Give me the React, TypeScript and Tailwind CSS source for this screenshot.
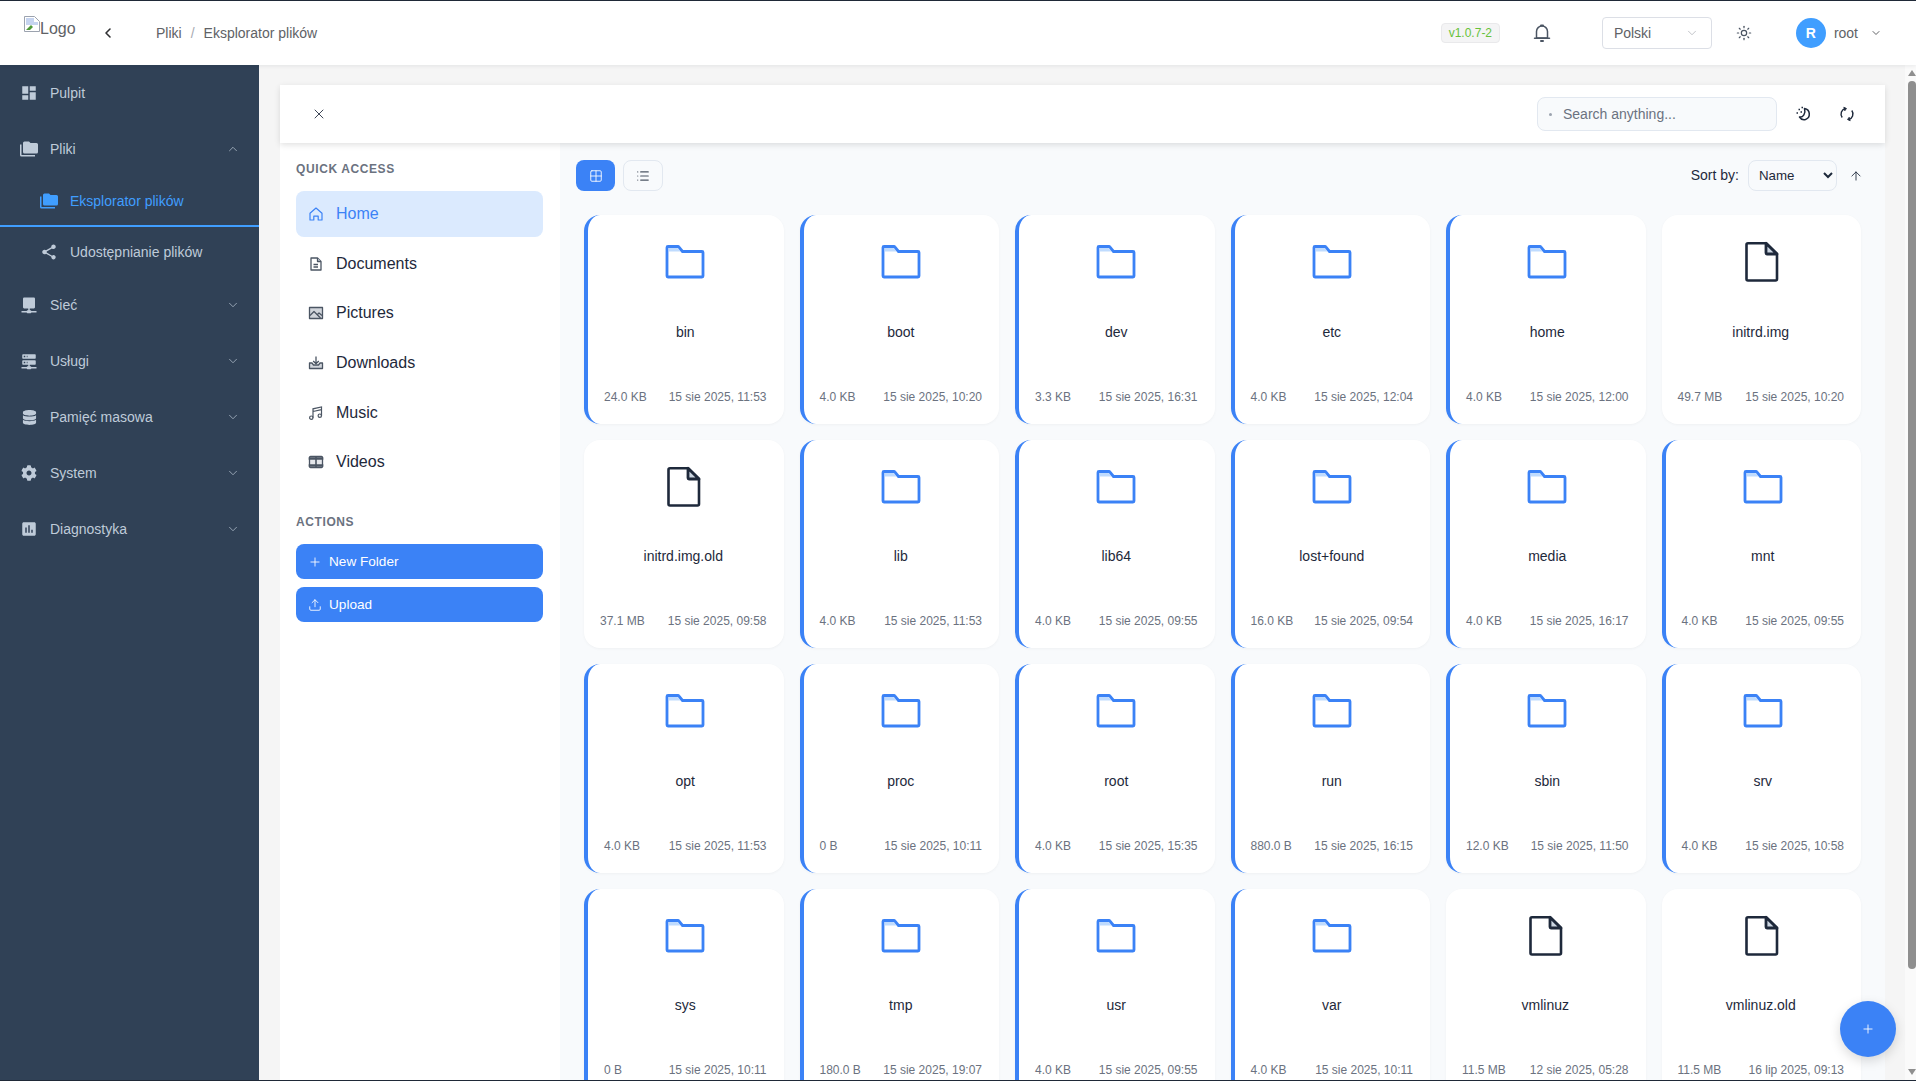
import { ReactNode } from "react";
import { ChevronDown, ChevronLeft, ChevronUp, ArrowUp, Grid2x2, List, Plus, Sun, Upload, X } from "lucide-react";
import { FaCog, FaDatabase } from "react-icons/fa";
import { MdAssessment, MdDashboard, MdShare } from "react-icons/md";

type Entry = { name: string; size: string; date: string; file?: boolean };

const entries: Entry[] = [
  { name: "bin", size: "24.0 KB", date: "15 sie 2025, 11:53" },
  { name: "boot", size: "4.0 KB", date: "15 sie 2025, 10:20" },
  { name: "dev", size: "3.3 KB", date: "15 sie 2025, 16:31" },
  { name: "etc", size: "4.0 KB", date: "15 sie 2025, 12:04" },
  { name: "home", size: "4.0 KB", date: "15 sie 2025, 12:00" },
  { name: "initrd.img", size: "49.7 MB", date: "15 sie 2025, 10:20", file: true },
  { name: "initrd.img.old", size: "37.1 MB", date: "15 sie 2025, 09:58", file: true },
  { name: "lib", size: "4.0 KB", date: "15 sie 2025, 11:53" },
  { name: "lib64", size: "4.0 KB", date: "15 sie 2025, 09:55" },
  { name: "lost+found", size: "16.0 KB", date: "15 sie 2025, 09:54" },
  { name: "media", size: "4.0 KB", date: "15 sie 2025, 16:17" },
  { name: "mnt", size: "4.0 KB", date: "15 sie 2025, 09:55" },
  { name: "opt", size: "4.0 KB", date: "15 sie 2025, 11:53" },
  { name: "proc", size: "0 B", date: "15 sie 2025, 10:11" },
  { name: "root", size: "4.0 KB", date: "15 sie 2025, 15:35" },
  { name: "run", size: "880.0 B", date: "15 sie 2025, 16:15" },
  { name: "sbin", size: "12.0 KB", date: "15 sie 2025, 11:50" },
  { name: "srv", size: "4.0 KB", date: "15 sie 2025, 10:58" },
  { name: "sys", size: "0 B", date: "15 sie 2025, 10:11" },
  { name: "tmp", size: "180.0 B", date: "15 sie 2025, 19:07" },
  { name: "usr", size: "4.0 KB", date: "15 sie 2025, 09:55" },
  { name: "var", size: "4.0 KB", date: "15 sie 2025, 10:11" },
  { name: "vmlinuz", size: "11.5 MB", date: "12 sie 2025, 05:28", file: true },
  { name: "vmlinuz.old", size: "11.5 MB", date: "16 lip 2025, 09:13", file: true },
];

const FoldersIcon = ({ className }: { className: string }) => (
  <svg viewBox="0 0 24 24" fill="currentColor" className={className}>
    <path d="M22 4h-8l-2-2H6a2 2 0 0 0-2 2v12a2 2 0 0 0 2 2h16a2 2 0 0 0 2-2V6a2 2 0 0 0-2-2ZM2 6H0v14a2 2 0 0 0 2 2h18v-2H2V6Z" />
  </svg>
);

const DesktopIcon = ({ className }: { className: string }) => (
  <svg viewBox="0 0 24 24" fill="currentColor" className={className}>
    <path d="M5.5 2h13A1.5 1.5 0 0 1 20 3.500V15a1.500 1.500 0 0 1-1.500 1.500H13V19h1a1 1 0 0 1 1 1h7v2h-7a1 1 0 0 1-1 1h-4a1 1 0 0 1-1-1H2v-2h7a1 1 0 0 1 1-1h1v-2.500H5.500A1.500 1.500 0 0 1 4 15V3.500A1.500 1.500 0 0 1 5.500 2Z" />
  </svg>
);

const ServerIcon = ({ className }: { className: string }) => (
  <svg viewBox="0 0 24 24" fill="currentColor" className={className}>
    <path d="M13 19h1a1 1 0 0 1 1 1h7v2h-7a1 1 0 0 1-1 1h-4a1 1 0 0 1-1-1H2v-2h7a1 1 0 0 1 1-1h1v-2H4a1 1 0 0 1-1-1v-4a1 1 0 0 1 1-1h16a1 1 0 0 1 1 1v4a1 1 0 0 1-1 1h-7v2ZM4 3h16a1 1 0 0 1 1 1v4a1 1 0 0 1-1 1H4a1 1 0 0 1-1-1V4a1 1 0 0 1 1-1Zm5 4h1V5H9v2Zm0 8h1v-2H9v2ZM5 5v2h2V5H5Zm0 8v2h2v-2H5Z" />
  </svg>
);

const FolderGlyph = () => (
  <svg viewBox="0 0 48 48" className="h-12 w-12" fill="none">
    <path d="M8 10h8.500l3 3.500H8Z" fill="#bfdbfe" />
    <path
      d="M7 8.500h10a1 1 0 0 1 .8.400l3.700 4.600H41a1 1 0 0 1 1 1V38a1 1 0 0 1-1 1H7a1 1 0 0 1-1-1V9.500a1 1 0 0 1 1-1Z"
      stroke="#3b82f6"
      strokeWidth="2.800"
      strokeLinejoin="round"
    />
  </svg>
);

const FileGlyph = () => (
  <svg viewBox="0 0 48 48" className="ml-[2px] h-12 w-12" fill="none">
    <path
      d="M10 5.200h18L39 16v25a1.500 1.500 0 0 1-1.500 1.500H10A1.500 1.500 0 0 1 8.500 41V6.700A1.500 1.500 0 0 1 10 5.200Z"
      stroke="#1e293b"
      strokeWidth="2.600"
      strokeLinejoin="round"
    />
    <path d="M28 5.200V15a1 1 0 0 0 1 1h10Z" fill="#cbd5e1" stroke="#1e293b" strokeWidth="2.800" strokeLinejoin="round" />
  </svg>
);

const HomeGlyph = () => (
  <svg viewBox="0 0 16 16" className="h-4 w-4" fill="none" stroke="currentColor" strokeWidth="1.200" strokeLinejoin="round">
    <path d="M2 7.200 8 2l6 5.200V14h-3.800v-3.800H5.800V14H2Z" />
  </svg>
);

const DocGlyph = () => (
  <svg viewBox="0 0 16 16" className="h-4 w-4" fill="none" stroke="currentColor" strokeWidth="1.300" strokeLinejoin="round">
    <path d="M3 2h6.500L13 5.500V14H3Z" />
    <path d="M9.500 2v3.500H13" fill="#cbd5e1" />
    <path d="M5.500 8.500h4.500M5.500 11h4.500" />
  </svg>
);

const PictureGlyph = () => (
  <svg viewBox="0 0 16 16" className="h-4 w-4" fill="none" stroke="currentColor" strokeWidth="1.300" strokeLinejoin="round">
    <rect x="1.500" y="2.500" width="13" height="11" fill="#d1d5db" />
    <path d="M2 10.500 6 6.500l6.500 6.500M9.500 9.500 11 8l3 2.500" />
  </svg>
);

const DownloadGlyph = () => (
  <svg viewBox="0 0 16 16" className="h-4 w-4" fill="none" stroke="currentColor" strokeWidth="1.300" strokeLinejoin="round">
    <path d="M8 1.500v7M5.200 6 8 8.800 10.800 6" />
    <path d="M4 8H1.500v5.500h13V8H12L10.500 10h-5Z" fill="#d1d5db" />
  </svg>
);

const MusicGlyph = () => (
  <svg viewBox="0 0 16 16" className="h-4 w-4" fill="none" stroke="currentColor" strokeWidth="1.200">
    <circle cx="3.300" cy="12.700" r="1.700" />
    <circle cx="11.800" cy="10.700" r="1.700" />
    <path d="M5 12.700V3.800L13.500 2v8.700M5 6.500l8.500-1.800" />
  </svg>
);

const VideoGlyph = () => (
  <svg viewBox="0 0 16 16" className="h-4 w-4" fill="none" stroke="currentColor" strokeWidth="1.300">
    <rect x="1.500" y="2.500" width="13" height="11" rx="1" fill="#e5e7eb" />
    <path d="M1.500 5H14.500V4h-13ZM1.500 12H14.500V11h-13ZM8 3v10" strokeWidth="1.600" />
  </svg>
);

const MoonGlyph = () => (
  <svg viewBox="0 0 16 16" className="h-4 w-4" fill="none" stroke="#1e293b">
    <path d="M8.500 2.500a5.700 5.700 0 0 1 1 11 5.500 5.500 0 0 1-6-2.500c3.500.7 6.500-3.500 5-8.500Z" strokeWidth="1.500" strokeLinejoin="round" />
    <path d="M2.500 3.500h1.500M5.500 1.500h1.500M.5 7h1.500M4.500 6h1.500" strokeWidth="1.400" />
  </svg>
);

const RefreshGlyph = () => (
  <svg viewBox="0 0 16 16" className="h-4 w-4" fill="none" stroke="#1e293b" strokeWidth="1.400" strokeLinejoin="round">
    <path d="M3.200 11.500A5.800 5.800 0 0 1 6.500 2.400" />
    <path d="M12.800 4.500A5.800 5.800 0 0 1 9.500 13.600" />
    <path d="M4.800 1.200 7.500 2.500 5.800 4.800ZM11.200 14.800 8.500 13.500l1.700-2.300Z" fill="#1e293b" strokeWidth="0.800" />
  </svg>
);

const BellGlyph = () => (
  <svg viewBox="0 0 20 20" className="h-5 w-5" fill="none" stroke="#4b5563" strokeWidth="1.500" strokeLinejoin="round">
    <path d="M4.500 15V8.500a5.500 5.500 0 0 1 11 0V15Z" />
    <path d="M2.500 15.200h15" strokeLinecap="round" />
    <path d="M9 2.500h2M9 18h2" strokeWidth="2" strokeLinecap="round" />
  </svg>
);

const SideRow = ({ icon, label, open }: { icon: ReactNode; label: string; open?: boolean }) => (
  <div className="flex h-14 items-center pl-5 pr-[19px] text-sm text-[#bfcbd9]">
    <span className="flex w-[18px] justify-center">{icon}</span>
    <span className="ml-3 flex-1">{label}</span>
    {open === undefined ? null : open ? (
      <ChevronUp className="h-3.5 w-3.5" strokeWidth={1.200} />
    ) : (
      <ChevronDown className="h-3.5 w-3.5" strokeWidth={1.200} />
    )}
  </div>
);

const Sidebar = () => (
  <aside className="w-[259px] shrink-0 bg-[#304156]">
    <SideRow icon={<MdDashboard className="h-[18px] w-[18px]" />} label="Pulpit" />
    <SideRow icon={<FoldersIcon className="h-[18px] w-[18px]" />} label="Pliki" open />
    <div className="flex h-[50px] items-center border-b-2 border-[#409eff] pl-10 text-sm text-[#409eff]">
      <FoldersIcon className="h-[18px] w-[18px]" />
      <span className="ml-3">Eksplorator plików</span>
    </div>
    <div className="flex h-[50px] items-center pl-10 text-sm text-[#bfcbd9]">
      <MdShare className="h-[18px] w-[18px]" />
      <span className="ml-3">Udostępnianie plików</span>
    </div>
    <SideRow icon={<DesktopIcon className="h-[18px] w-[18px]" />} label="Sieć" open={false} />
    <SideRow icon={<ServerIcon className="h-[18px] w-[18px]" />} label="Usługi" open={false} />
    <SideRow icon={<FaDatabase className="h-[15px] w-[15px]" />} label="Pamięć masowa" open={false} />
    <SideRow icon={<FaCog className="h-4 w-4" />} label="System" open={false} />
    <SideRow icon={<MdAssessment className="h-[18px] w-[18px]" />} label="Diagnostyka" open={false} />
  </aside>
);

const Header = () => (
  <header className="relative z-20 flex h-16 shrink-0 items-center bg-white pr-[34px] shadow-[0_1px_4px_rgba(0,21,41,0.08)]">
    <div className="flex w-[104px] items-start pl-6">
      <div className="-mt-[11px] flex items-start text-base text-[#606266]">
        <svg viewBox="0 0 16 16" className="h-4 w-4 shrink-0">
          <path d="M.5.500h10l5 5v10H.5Z" fill="#fff" stroke="#9ca3af" />
          <path d="M2 2h8v4h4v3H2Z" fill="#c6d4f0" />
          <path d="M2 14l5-5 2 2-3 3Z" fill="#4f9a3a" />
        </svg>
        <span className="mt-[3px] leading-5">Logo</span>
      </div>
    </div>
    <ChevronLeft className="h-4 w-4 -ml-1 text-[#303133]" strokeWidth={2.400} />
    <nav className="ml-[40px] flex items-center text-sm text-[#606266]">
      <span>Pliki</span>
      <span className="mx-[9px] text-[#a8abb2]">/</span>
      <span>Eksplorator plików</span>
    </nav>
    <div className="ml-auto flex h-5 w-[59px] items-center justify-center rounded border border-[#e9e9eb] bg-[#f4f4f5] text-xs text-[#67c23a]">v1.0.7-2</div>
    <span className="ml-[32px]">
      <BellGlyph />
    </span>
    <div className="ml-[50px] flex h-8 w-[110px] items-center justify-between rounded border border-[#dcdfe6] pl-[11px] pr-[12px] text-sm text-[#606266]">
      <span>Polski</span>
      <ChevronDown className="h-3.5 w-3.5 text-[#a8abb2]" strokeWidth={1.200} />
    </div>
    <Sun className="ml-6 h-4 w-4 text-[#4b5563]" strokeWidth={1.800} />
    <div className="ml-[44px] flex h-[30px] w-[30px] items-center justify-center rounded-full bg-[#409eff] text-sm font-bold text-white">R</div>
    <span className="ml-2 text-sm text-[#606266]">root</span>
    <ChevronDown className="ml-3 h-3 w-3 text-[#606266]" strokeWidth={2} />
  </header>
);

const QuickRow = ({ icon, label, active }: { icon: ReactNode; label: string; active?: boolean }) => (
  <div
    className={
      active
        ? "flex h-[45.7px] items-center rounded-lg bg-[#dbeafe] pl-3 text-base text-[#3b82f6]"
        : "flex h-[45.7px] items-center pl-3 text-base text-[#1e293b]"
    }
  >
    <span className={active ? "text-[#3b82f6]" : "text-[#4b5563]"}>{icon}</span>
    <span className="ml-3">{label}</span>
  </div>
);

const ActionButton = ({ icon, label }: { icon: ReactNode; label: string }) => (
  <button className="flex h-[35px] items-center rounded-lg bg-[#3b82f6] pl-3 text-[13.6px] text-white">
    {icon}
    <span className="ml-[7px] mt-px">{label}</span>
  </button>
);

const QuickAccess = () => (
  <div className="w-[280px] shrink-0 bg-white pl-4 pr-[17px] pt-[18px]">
    <div className="mb-[14px] text-xs font-bold leading-4 tracking-[0.6px] text-[#6b7280]">QUICK ACCESS</div>
    <div className="flex flex-col gap-1">
      <QuickRow icon={<HomeGlyph />} label="Home" active />
      <QuickRow icon={<DocGlyph />} label="Documents" />
      <QuickRow icon={<PictureGlyph />} label="Pictures" />
      <QuickRow icon={<DownloadGlyph />} label="Downloads" />
      <QuickRow icon={<MusicGlyph />} label="Music" />
      <QuickRow icon={<VideoGlyph />} label="Videos" />
    </div>
    <div className="mb-[14px] mt-[29px] text-xs font-bold leading-4 tracking-[0.6px] text-[#6b7280]">ACTIONS</div>
    <div className="flex flex-col gap-2">
      <ActionButton icon={<Plus className="h-3.5 w-3.5" strokeWidth={1.500} />} label="New Folder" />
      <ActionButton icon={<Upload className="h-3.5 w-3.5" strokeWidth={1.500} />} label="Upload" />
    </div>
  </div>
);

const EntryCard = ({ entry }: { entry: Entry }) => (
  <div
    className={
      entry.file
        ? "flex h-[208.5px] flex-col items-center rounded-2xl bg-white pb-[19px] pl-4 pr-[17px] pt-[23px] shadow-[0_1px_3px_rgba(0,0,0,0.04)]"
        : "flex h-[208.5px] flex-col items-center rounded-2xl border-l-4 border-[#3b82f6] bg-white pb-[19px] pl-4 pr-[17px] pt-[23px] shadow-[0_1px_3px_rgba(0,0,0,0.04)]"
    }
  >
    {entry.file ? <FileGlyph /> : <FolderGlyph />}
    <div className="mt-[35.6px] text-sm leading-5 text-[#1e293b]">{entry.name}</div>
    <div className="mt-auto flex w-full justify-between text-xs leading-4 text-[#6b7280]">
      <span>{entry.size}</span>
      <span>{entry.date}</span>
    </div>
  </div>
);

const Explorer = () => (
  <div className="min-w-0 flex-1 bg-[#f8fafc] pb-6">
    <div className="mt-[17px] flex h-[31px] items-center pl-4 pr-[22px]">
      <button className="flex h-[31px] w-[39px] items-center justify-center rounded-lg bg-[#3b82f6] text-white">
        <Grid2x2 className="h-3.5 w-3.5" strokeWidth={1.500} />
      </button>
      <button className="ml-2 flex h-[31px] w-[40px] items-center justify-center rounded-lg border border-[#e2e8f0] text-[#4b5563]">
        <List className="h-3.5 w-3.5" strokeWidth={2} />
      </button>
      <span className="ml-auto -mt-px text-sm text-[#1e293b]">Sort by:</span>
      <select className="ml-[9px] h-[31px] w-[89px] rounded-lg border border-[#e2e8f0] bg-[#f8fafc] pl-[6px] text-[13.3px] text-[#1e293b]">
        <option>Name</option>
      </select>
      <ArrowUp className="ml-3 h-3.5 w-3.5 text-[#1e293b]" strokeWidth={1.500} />
    </div>
    <div className="mt-6 grid grid-cols-6 gap-4 px-6">
      {entries.map((entry) => (
        <EntryCard key={entry.name} entry={entry} />
      ))}
    </div>
  </div>
);

// the page scrollbar is drawn by hand, headless chrome hides the native one
const ScrollTrack = () => (
  <div className="flex w-[11px] shrink-0 flex-col items-end bg-[#fafafa]">
    <svg viewBox="0 0 8 6" className="mt-[5px] h-[6px] w-2 text-[#8f8f8f]" fill="currentColor">
      <path d="M4 0 8 6H0Z" />
    </svg>
    <div className="mt-[5px] h-[888px] w-2 rounded-full bg-[#8f8f8f]" />
    <svg viewBox="0 0 8 6" className="mb-[5px] mt-auto h-[6px] w-2 text-[#8f8f8f]" fill="currentColor">
      <path d="M4 6 8 0H0Z" />
    </svg>
  </div>
);

export default function App() {
  return (
    <div className="relative flex h-[1081px] flex-col overflow-hidden border-y border-[#1f2937] bg-[#f5f5f5] font-['Liberation_Sans',sans-serif]">
      <Header />
      <div className="flex min-h-0 flex-1">
        <Sidebar />
        <main className="min-w-0 flex-1 overflow-hidden pl-[21px] pr-5 pt-5">
          <div className="relative z-10 flex h-[58px] items-center justify-between bg-white pl-[31px] pr-[30px] shadow-[0_2px_6px_rgba(0,0,0,0.12)]">
            <X className="h-4 w-4 text-[#1e293b]" strokeWidth={1.300} />
            <div className="flex items-center">
              <div className="flex h-[34px] w-[240px] items-center rounded-lg border border-[#e2e8f0] bg-[#f8fafc] pl-[11px] text-sm text-[#6b7280]">
                <span className="h-[3px] w-[3px] rounded-full bg-[#9ca3af]" />
                <span className="ml-[11px]">Search anything...</span>
              </div>
              <span className="ml-[19px]">
                <MoonGlyph />
              </span>
              <span className="ml-[27px]">
                <RefreshGlyph />
              </span>
            </div>
          </div>
          <div className="flex">
            <QuickAccess />
            <Explorer />
          </div>
        </main>
        <ScrollTrack />
      </div>
      <button className="absolute left-[1840px] top-[1000px] z-30 flex h-14 w-14 items-center justify-center rounded-full bg-[#3b82f6] text-white shadow-[0_4px_12px_rgba(0,0,0,0.15)]">
        <Plus className="h-3.5 w-3.5" strokeWidth={1.500} />
      </button>
    </div>
  );
}
